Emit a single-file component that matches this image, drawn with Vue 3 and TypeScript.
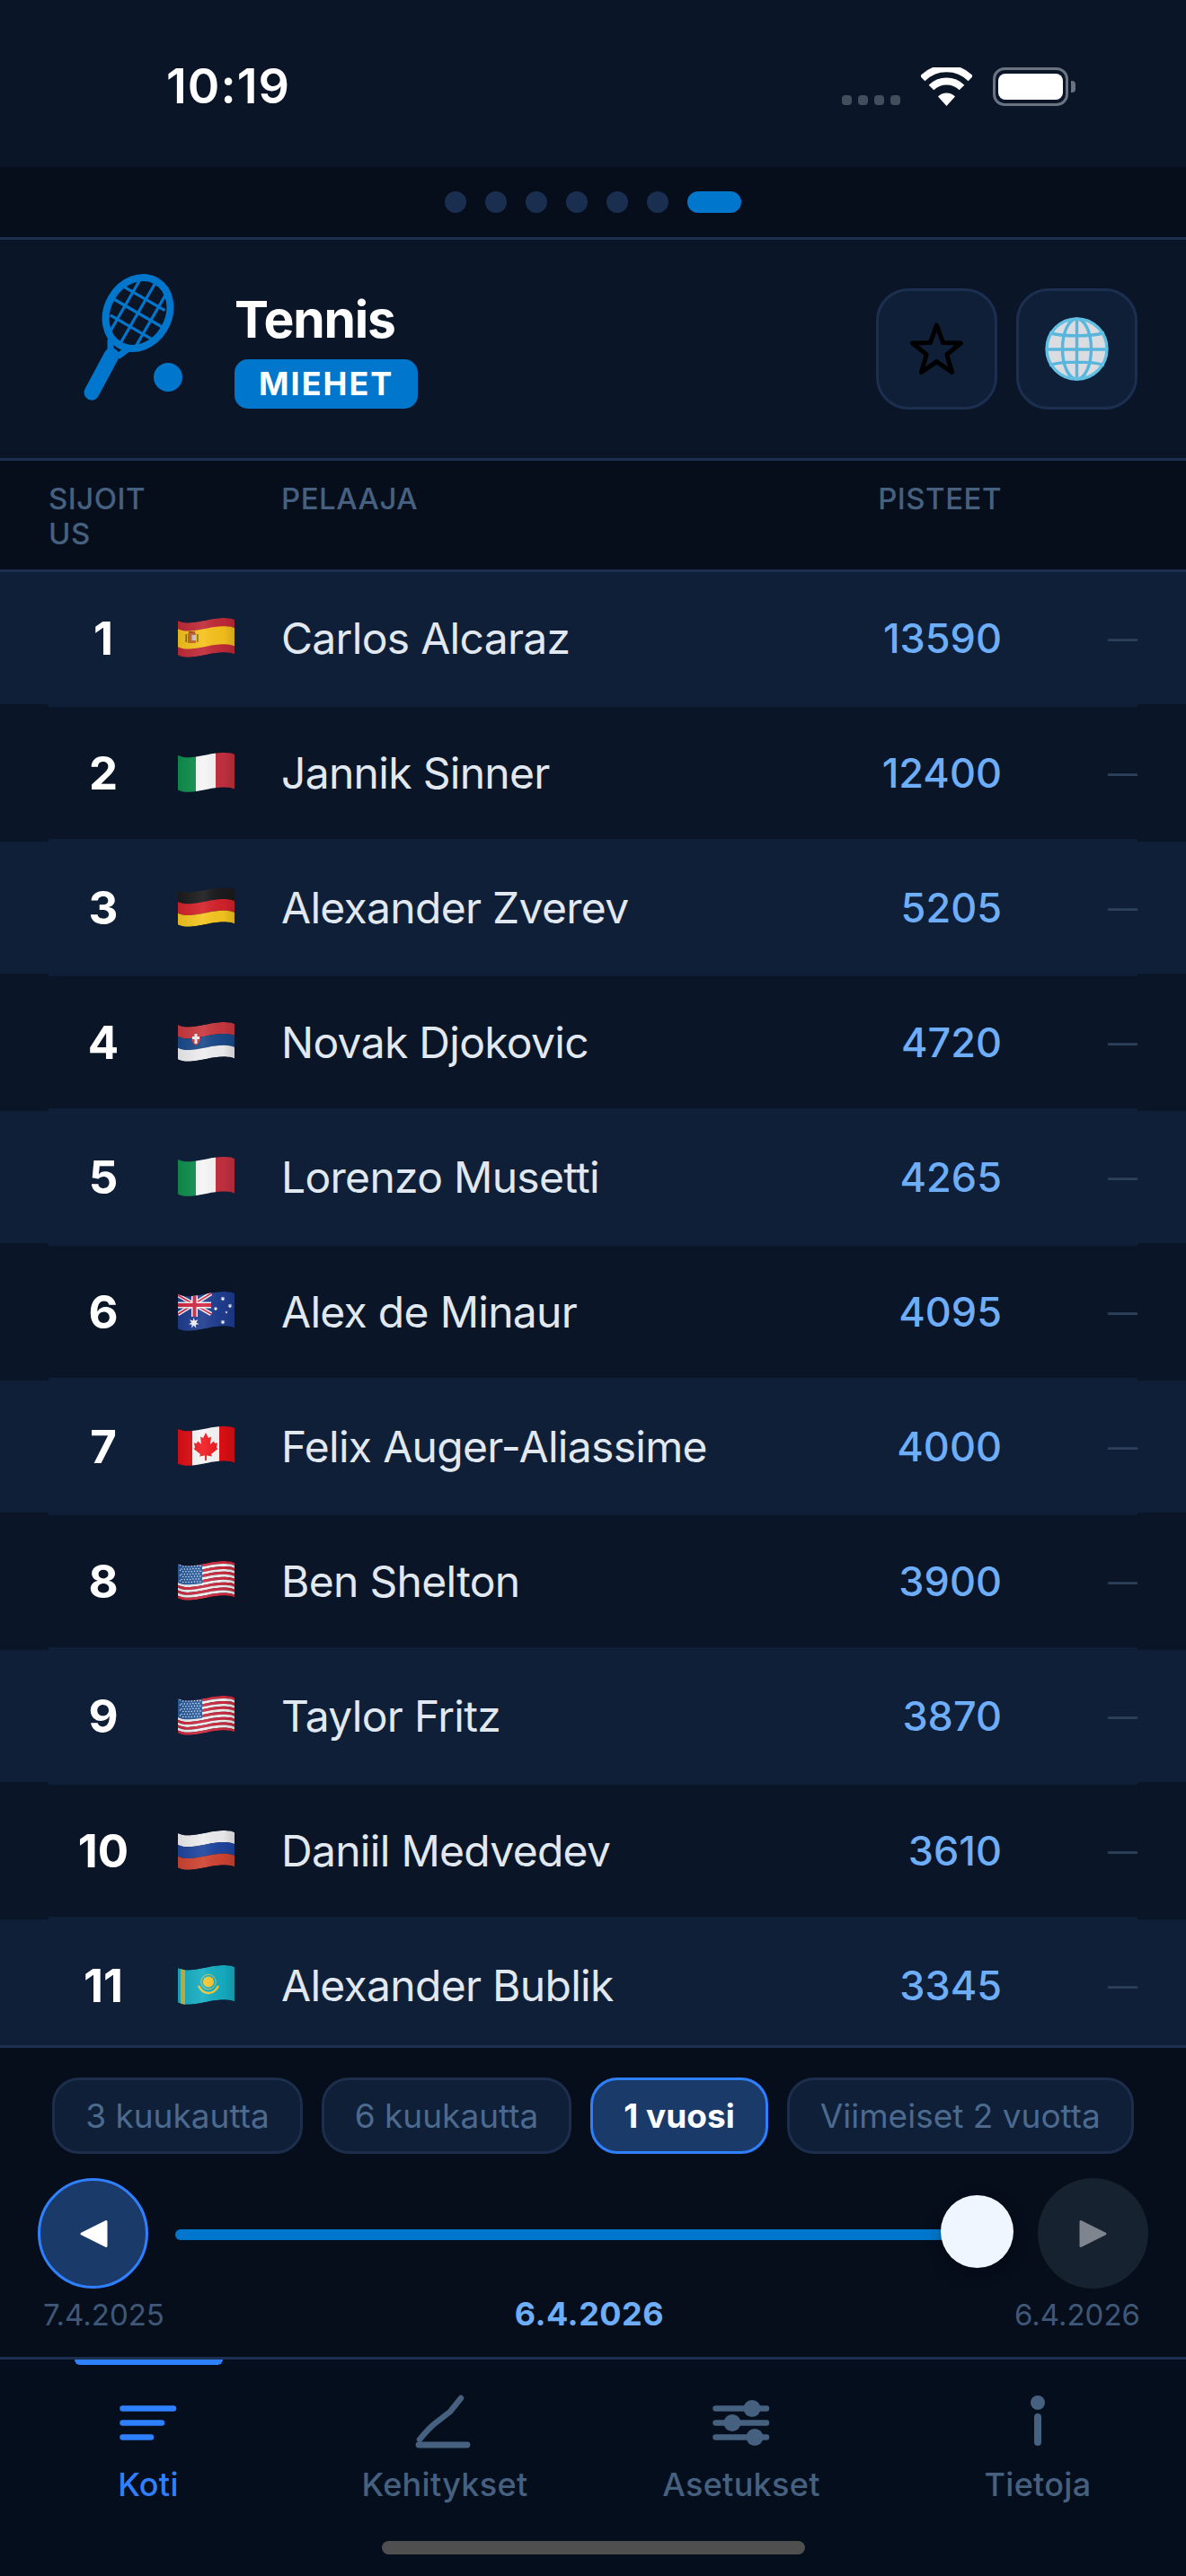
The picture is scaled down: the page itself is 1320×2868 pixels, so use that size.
<script setup lang="ts">
interface Shape {
  d: string;
  fill?: string;
  stroke?: string;
  sw?: number;
}

const H = 38.5;

function band(t0: number, t1: number, fill: string): Shape {
  const a = t0 * H;
  const b = t1 * H;
  return {
    fill,
    d:
      `M0 ${a + 3}C5 ${a + 5.5} 10 ${a + 5.5} 16 ${a + 5}C28 ${a + 4} 38 ${a} 50 ${a}C55 ${a} 60 ${a + 0.5} 63 ${a + 2}` +
      `L63 ${b + 2}C60 ${b + 0.5} 55 ${b} 50 ${b}C38 ${b} 28 ${b + 4} 16 ${b + 5}C10 ${b + 5.5} 5 ${b + 5.5} 0 ${b + 3}Z`,
  };
}

const col = (x0: number, x1: number, fill: string): Shape => ({ fill, d: `M${x0} 0H${x1}V46H${x0}Z` });

const dot = (x: number, y: number, r: number) => `M${x - r} ${y}a${r} ${r} 0 1 0 ${2 * r} 0a${r} ${r} 0 1 0 ${-2 * r} 0Z`;

function star(x: number, y: number, r: number, n = 7): string {
  let d = '';
  for (let i = 0; i < n * 2; i++) {
    const rad = i % 2 ? r * 0.45 : r;
    const ang = (Math.PI * i) / n - Math.PI / 2;
    d += `${i ? 'L' : 'M'}${(x + rad * Math.cos(ang)).toFixed(2)} ${(y + rad * Math.sin(ang)).toFixed(2)}`;
  }
  return d + 'Z';
}

function usStars(): string {
  let d = '';
  for (let r = 0; r < 7; r++) {
    for (let c = 0; c < 8; c++) {
      const x = 2.5 + c * 3.2 + (r % 2 ? 1.6 : 0);
      if (x > 26) continue;
      const wob = x < 16 ? 5 : 4.5;
      d += dot(x, wob + 1 + r * 2.9 - (x < 4 ? 1.5 : 0), 0.75);
    }
  }
  return d;
}

function usStripes(): Shape[] {
  const out: Shape[] = [];
  for (let i = 0; i < 13; i++) out.push(band(i / 13, (i + 1) / 13, i % 2 ? '#f0f0f2' : '#cf2a3e'));
  return out;
}

const FLAGS: Record<string, Shape[]> = {
  es: [
    band(0, 1, '#c02a38'),
    band(0.24, 0.76, '#f5c21c'),
    { d: 'M11 17h9v11h-9z', fill: '#c2662c' },
    { d: 'M15.5 19h4.5v6h-4.5z', fill: '#c9c2c8' },
    { d: 'M12 15h7v2h-7z', fill: '#a8501f' },
    { d: 'M8.5 18h1.4v9H8.5zM21.2 18h1.4v9h-1.4z', fill: '#6a5a32' },
  ],
  it: [col(0, 20, '#0f8f4e'), col(20, 42, '#f5f5f6'), col(42, 63, '#c4303f')],
  de: [band(0, 0.34, '#1b1b1e'), band(0.34, 0.67, '#d4232b'), band(0.67, 1, '#f5c51f')],
  rs: [
    band(0, 0.34, '#c8383f'),
    band(0.34, 0.67, '#1a4a8a'),
    band(0.67, 1, '#eeeef0'),
    { d: 'M15 11h10v6c0 5-3 8-5 9-2-1-5-4-5-9z', fill: '#c8383f' },
    { d: 'M18.5 13h3v11h-3zM16 16h8v3h-8z', fill: '#eee' },
  ],
  au: [
    band(0, 1, '#1f3d8f'),
    { d: 'M0 4L37 25M0 25L37 2', stroke: '#f2f2f4', sw: 4.5 },
    { d: 'M0 4L37 25M0 25L37 2', stroke: '#d32a45', sw: 1.6 },
    { d: 'M18.5 0V28M0 15H37', stroke: '#f2f2f4', sw: 7 },
    { d: 'M18.5 0V28M0 15H37', stroke: '#d32a45', sw: 4 },
    { d: star(17.7, 35, 6) + star(50, 8, 2.8) + star(58, 16, 2.8) + star(42, 19, 2.5) + star(54, 23, 1.7, 5) + star(50, 34, 2.8), fill: '#f4f4f6' },
  ],
  ca: [
    col(0, 16, '#dd0f14'),
    col(16, 46, '#f5f5f5'),
    col(46, 63, '#dd0f14'),
    {
      d: 'M31 7L34 13L37 11.5L36 20L40 16.5L41 19L44 18.5L43 24L44.5 25L37 31L38 33.5L32 32.5V38H30V32.5L24 33.5L25 31L17.5 25L19 24L18 18.5L21 19L22 16.5L26 20L25 11.5L28 13Z',
      fill: '#ef1c22',
    },
  ],
  us: [
    ...usStripes(),
    { d: 'M0 3C5 5.5 10 5.5 16 5L27 4.2V25L16 26C10 26.5 5 26.5 0 24Z', fill: '#2a5d9e' },
    { d: usStars(), fill: '#e9eef6' },
  ],
  ru: [band(0, 0.34, '#ededf0'), band(0.34, 0.67, '#1f459f'), band(0.67, 1, '#cf4432')],
  kz: [
    band(0, 1, '#16adc2'),
    { d: 'M3 2h5v42H3z', fill: '#c5b33e' },
    { d: dot(34, 18.5, 6), fill: '#f7c72f' },
    { d: dot(34, 18.5, 8.2), fill: 'none', stroke: '#e9c94a', sw: 0.8 },
    { d: 'M23 23C26 29 30 31 34 31C38 31 42 29 45 23', fill: 'none', stroke: '#f7c72f', sw: 2.4 },
  ],
};

const players = [
  { name: 'Carlos Alcaraz', points: 13590, flag: 'es' },
  { name: 'Jannik Sinner', points: 12400, flag: 'it' },
  { name: 'Alexander Zverev', points: 5205, flag: 'de' },
  { name: 'Novak Djokovic', points: 4720, flag: 'rs' },
  { name: 'Lorenzo Musetti', points: 4265, flag: 'it' },
  { name: 'Alex de Minaur', points: 4095, flag: 'au' },
  { name: 'Felix Auger-Aliassime', points: 4000, flag: 'ca' },
  { name: 'Ben Shelton', points: 3900, flag: 'us' },
  { name: 'Taylor Fritz', points: 3870, flag: 'us' },
  { name: 'Daniil Medvedev', points: 3610, flag: 'ru' },
  { name: 'Alexander Bublik', points: 3345, flag: 'kz' },
];

const WAVE = band(0, 1, '#000').d;

const ranges = [
  { label: '3 kuukautta', active: false },
  { label: '6 kuukautta', active: false },
  { label: '1 vuosi', active: true },
  { label: 'Viimeiset 2 vuotta', active: false },
];

const tabs = ['Koti', 'Kehitykset', 'Asetukset', 'Tietoja'];
</script>

<template>
  <div class="app">
    <div class="status">
      <span class="time">10:19</span>
      <div class="status-right">
        <div class="signal"><i></i><i></i><i></i><i></i></div>
        <svg class="wifi" width="57" height="43" viewBox="0 0 57 43">
          <g fill="none" stroke="#fff" stroke-width="8">
            <path d="M1.6 12.4A38 38 0 0 1 55.4 12.4" />
            <path d="M11.5 22.5A24 24 0 0 1 45.5 22.5" />
          </g>
          <path d="M28.5 43L19 32.5A13.5 13.5 0 0 1 38 32.5Z" fill="#fff" />
        </svg>
        <div class="battery"><div class="battery-fill"></div></div>
        <div class="battery-nub"></div>
      </div>
    </div>

    <div class="pager">
      <i v-for="n in 6" :key="n" class="pager-dot"></i>
      <i class="pager-dot on"></i>
    </div>

    <header class="head">
      <svg class="racket" width="116" height="148" viewBox="0 0 116 148">
        <g fill="none" stroke="#0077cc" stroke-linecap="round">
          <g transform="rotate(30 63.5 46.5)">
            <ellipse cx="63.5" cy="46.5" rx="34" ry="41" stroke-width="8" />
            <path
              d="M47 11V82M63.5 6V87M80 11V82M34 29H88M32 46.5H95M38 64H92"
              stroke-width="3.2"
              stroke-linecap="butt"
            />
          </g>
          <path d="M33 76V94M53 86L41 95" stroke-width="7" stroke-linecap="butt" />
          <path d="M34 94L12 135" stroke-width="17" />
        </g>
        <circle cx="97" cy="118" r="16" fill="#0077cc" />
      </svg>
      <div class="head-text">
        <div class="title">Tennis</div>
        <div class="badge">MIEHET</div>
      </div>
      <div class="head-btns">
        <button class="sq-btn">
          <svg width="63" height="61" viewBox="0 0 63 61">
            <path
              d="M31.5 4L38.6 23.6L58.5 24L42.8 36.6L48.6 56.5L31.5 44.6L14.4 56.5L20.2 36.6L4.5 24L24.4 23.6Z"
              fill="none"
              stroke="#000"
              stroke-width="5"
              stroke-linejoin="round"
            />
          </svg>
        </button>
        <button class="sq-btn">
          <svg width="71" height="71" viewBox="0 0 71 71">
            <circle cx="35.5" cy="35.5" r="34" fill="#dadce1" />
            <g fill="none" stroke="#58b6dc" stroke-width="3.4">
              <ellipse cx="35.5" cy="35.5" rx="16" ry="33.5" />
              <path d="M35.5 2V69M5 17.5C20 22 51 22 66 17.5M2 36H69M5 53.5C20 49 51 49 66 53.5" />
              <circle cx="35.5" cy="35.5" r="33.5" stroke="#62bfe2" />
            </g>
          </svg>
        </button>
      </div>
    </header>

    <div class="thead">
      <span class="th th-rank">SIJOITUS</span>
      <span class="th th-name">PELAAJA</span>
      <span class="th th-points">PISTEET</span>
    </div>

    <div class="list">
      <template v-for="(p, i) in players" :key="p.name">
        <div class="row" :class="{ odd: i % 2 === 0 }">
          <span class="rank">{{ i + 1 }}</span>
          <span class="flag-cell">
            <svg class="flag" width="63" height="46" viewBox="0 0 63 46">
              <defs>
                <clipPath :id="`wave${i}`"><path :d="WAVE" /></clipPath>
                <linearGradient :id="`sheen${i}`" x1="0" x2="1" y1="0" y2="0">
                  <stop offset="0" stop-color="#000" stop-opacity="0.08" />
                  <stop offset="0.45" stop-color="#fff" stop-opacity="0.08" />
                  <stop offset="0.8" stop-color="#000" stop-opacity="0.03" />
                  <stop offset="1" stop-color="#000" stop-opacity="0.14" />
                </linearGradient>
              </defs>
              <g :clip-path="`url(#wave${i})`">
                <path
                  v-for="(s, k) in FLAGS[p.flag]"
                  :key="k"
                  :d="s.d"
                  :fill="s.fill ?? 'none'"
                  :stroke="s.stroke"
                  :stroke-width="s.sw"
                />
                <path :d="WAVE" :fill="`url(#sheen${i})`" />
              </g>
            </svg>
          </span>
          <span class="name">{{ p.name }}</span>
          <span class="points">{{ p.points }}</span>
          <span class="trend">—</span>
        </div>
        <div class="sep"></div>
      </template>
    </div>

    <section class="controls">
      <div class="chips">
        <button v-for="r in ranges" :key="r.label" class="chip" :class="{ active: r.active }">{{ r.label }}</button>
      </div>
      <div class="slider">
        <button class="round prev">
          <svg width="34" height="34" viewBox="0 0 34 34">
            <path d="M31 3.5V30.5L4 17Z" fill="#fff" stroke="#fff" stroke-width="3" stroke-linejoin="round" />
          </svg>
        </button>
        <div class="track"><div class="thumb"></div></div>
        <button class="round next">
          <svg width="34" height="34" viewBox="0 0 34 34">
            <path d="M3 3.5V30.5L30 17Z" fill="#7f858f" stroke="#7f858f" stroke-width="3" stroke-linejoin="round" />
          </svg>
        </button>
      </div>
      <div class="dates">
        <span class="date">7.4.2025</span>
        <span class="date-now">6.4.2026</span>
        <span class="date">6.4.2026</span>
      </div>
    </section>

    <nav class="tabs">
      <div v-for="(t, i) in tabs" :key="t" class="tab" :class="{ on: i === 0 }">
        <i v-if="i === 0" class="tab-mark"></i>
        <svg class="tab-icon" width="72" height="66" viewBox="0 0 72 66">
          <g v-if="i === 0" fill="none" stroke="currentColor" stroke-width="6.5" stroke-linecap="round">
            <path d="M7.5 16.5H64M7.5 32.5H51M7.5 48.5H39" />
          </g>
          <g v-else-if="i === 1" fill="none" stroke="currentColor" stroke-width="6.5" stroke-linecap="round" stroke-linejoin="round">
            <path d="M8 51C13 45 18 39 24 34L42 20C46 15 50 10 54 5" />
            <path d="M7 57H61" stroke-width="6.8" />
          </g>
          <g v-else-if="i === 2" fill="currentColor">
            <path d="M7.5 16.5H64M7.5 32.5H64M7.5 48.5H64" stroke="currentColor" stroke-width="6.5" stroke-linecap="round" />
            <circle cx="48" cy="16.5" r="9.5" />
            <circle cx="26" cy="32.5" r="9.5" />
            <circle cx="51" cy="48.5" r="9.5" />
          </g>
          <g v-else fill="currentColor">
            <circle cx="36" cy="10" r="8" />
            <rect x="32" y="22" width="8" height="36" rx="4" />
          </g>
        </svg>
        <span class="tab-label">{{ t }}</span>
      </div>
      <i class="home-bar"></i>
    </nav>
  </div>
</template>

<style scoped>
.app {
  width: 1320px;
  height: 2868px;
  display: flex;
  flex-direction: column;
  overflow: hidden;
  background: #0a1628;
  font-family: Inter, 'Noto Sans', sans-serif;
}

.status {
  height: 186px;
  flex: none;
  position: relative;
  display: flex;
  justify-content: space-between;
  padding: 66px 123px 0 185px;
  box-sizing: border-box;
}
.time {
  color: #fff;
  font-size: 54px;
  line-height: 60px;
  font-weight: 600;
  letter-spacing: 1px;
}
.status-right {
  display: flex;
  align-items: flex-end;
  height: 43px;
  margin-top: 9px;
}
.signal {
  display: flex;
  gap: 7px;
  margin-right: 23px;
  margin-bottom: 1px;
}
.signal i {
  width: 11px;
  height: 11px;
  border-radius: 4px;
  background: #434e5c;
}
.wifi {
  display: block;
  margin-right: 23px;
}
.battery {
  width: 84px;
  height: 43px;
  box-sizing: border-box;
  border: 3px solid #6b7280;
  border-radius: 13px;
  padding: 4px 3px;
}
.battery-fill {
  width: 100%;
  height: 100%;
  background: #fff;
  border-radius: 8px;
}
.battery-nub {
  width: 5px;
  height: 13px;
  background: #6b7280;
  border-radius: 0 4px 4px 0;
  margin: 0 0 15px 3px;
}

.pager {
  height: 81px;
  flex: none;
  box-sizing: border-box;
  background: #060e1c;
  border-bottom: 3px solid #1c2f50;
  display: flex;
  justify-content: center;
  align-items: center;
  gap: 21px;
}
.pager-dot {
  width: 24px;
  height: 24px;
  border-radius: 12px;
  background: #1a2f50;
}
.pager-dot.on {
  width: 60px;
  background: #0077cc;
}

.head {
  height: 246px;
  flex: none;
  box-sizing: border-box;
  border-bottom: 3px solid #1c2f50;
  display: flex;
  align-items: flex-start;
  padding: 35px 54px 0 90px;
}
.racket {
  display: block;
  margin-right: 55px;
}
.head-text {
  flex: 1;
  margin-top: 19px;
}
.title {
  color: #fff;
  font-size: 57px;
  line-height: 69px;
  font-weight: 700;
  letter-spacing: -1.2px;
}
.badge {
  display: inline-block;
  margin-top: 10px;
  padding: 0 27px;
  height: 55px;
  line-height: 55px;
  background: #0077cc;
  color: #fff;
  border-radius: 15px;
  font-size: 36px;
  font-weight: 700;
  letter-spacing: 2px;
}
.head-btns {
  display: flex;
  gap: 21px;
  margin-top: 19px;
}
.sq-btn {
  width: 135px;
  height: 135px;
  box-sizing: border-box;
  background: #0f1f38;
  border: 3px solid #1c2f50;
  border-radius: 36px;
  padding: 0;
  display: flex;
  align-items: center;
  justify-content: center;
}

.thead {
  height: 124px;
  flex: none;
  box-sizing: border-box;
  background: #060e1c;
  border-bottom: 3px solid #1c2f50;
  display: grid;
  grid-template-columns: 122px 137px 1fr 190px 151px;
  padding: 23px 54px 0;
  align-items: start;
}
.th {
  color: #46607f;
  font-size: 33px;
  line-height: 39px;
  font-weight: 500;
  letter-spacing: 0.5px;
}
.th-rank {
  grid-column: 1;
  word-break: break-all;
  width: 112px;
}
.th-name {
  grid-column: 3;
}
.th-points {
  grid-column: 4;
  text-align: right;
}

.list {
  flex: 1;
  min-height: 0;
  overflow: hidden;
  background: #0a1628;
}
.row {
  height: 147px;
  box-sizing: border-box;
  display: grid;
  grid-template-columns: 122px 137px 1fr 190px 151px;
  align-items: center;
  padding: 0 54px;
}
.row.odd {
  background: #0f1f38;
}
.sep {
  height: 3px;
  margin: 0 54px;
  background: #0f1f38;
}
.rank {
  color: #fff;
  font-size: 51px;
  font-weight: 700;
  text-align: center;
}
.flag-cell {
  padding-left: 22px;
  display: flex;
}
.flag {
  display: block;
  filter: blur(0.45px);
}
.name {
  color: #e2e8f0;
  font-size: 48px;
  font-weight: 400;
  letter-spacing: -0.7px;
  white-space: nowrap;
}
.points {
  color: #6eaef8;
  font-size: 45px;
  font-weight: 500;
  text-align: right;
}
.trend {
  color: #2c4059;
  font-size: 33px;
  text-align: right;
}

.controls {
  flex: none;
  height: 347px;
  box-sizing: border-box;
  background: #060e1c;
  border-top: 3px solid #1c2f50;
  padding-top: 33px;
}
.chips {
  display: flex;
  justify-content: center;
  gap: 21px;
}
.chip {
  height: 85px;
  box-sizing: border-box;
  padding: 0 34px;
  background: #0f1f38;
  border: 3px solid #1c2e4c;
  border-radius: 30px;
  color: #4c6a8e;
  font-family: inherit;
  font-size: 37px;
  font-weight: 400;
  white-space: nowrap;
}
.chip.active {
  background: #1a3a6a;
  border-color: #2f80ff;
  color: #fff;
  font-weight: 700;
}
.slider {
  display: flex;
  align-items: center;
  padding: 0 42px;
  margin-top: 27px;
}
.round {
  width: 123px;
  height: 123px;
  flex: none;
  box-sizing: border-box;
  border-radius: 50%;
  border: 3px solid transparent;
  padding: 0;
  display: flex;
  align-items: center;
  justify-content: center;
}
.prev {
  background: #1a3a6a;
  border-color: #2f80ff;
}
.next {
  background: #172231;
}
.track {
  flex: 1;
  height: 12px;
  margin: 2px 30px 0;
  background: #0077cc;
  border-radius: 6px;
  position: relative;
}
.thumb {
  position: absolute;
  right: -3px;
  top: -38px;
  width: 81px;
  height: 81px;
  border-radius: 50%;
  background: #eff6ff;
  box-shadow: 0 6px 18px rgba(0, 0, 0, 0.3);
}
.dates {
  display: flex;
  justify-content: space-between;
  align-items: baseline;
  padding: 0 51px 0 48px;
  margin-top: 7px;
}
.date {
  color: #3f5878;
  font-size: 33px;
  line-height: 42px;
}
.date-now {
  color: #6eaef8;
  font-size: 36px;
  font-weight: 700;
  letter-spacing: 0.5px;
  line-height: 42px;
}

.tabs {
  flex: none;
  height: 244px;
  box-sizing: border-box;
  background: #050e1c;
  border-top: 3px solid #1c2f50;
  display: grid;
  grid-template-columns: repeat(4, 330px);
  position: relative;
}
.tab {
  position: relative;
  display: flex;
  flex-direction: column;
  align-items: center;
  padding-top: 38px;
  color: #46607f;
}
.tab.on {
  color: #2f80ff;
}
.tab-mark {
  position: absolute;
  top: 0;
  left: 83px;
  width: 165px;
  height: 6px;
  background: #2f80ff;
  border-radius: 0 0 6px 6px;
}
.tab-icon {
  display: block;
}
.tab-label {
  font-size: 36px;
  line-height: 44px;
  font-weight: 500;
  letter-spacing: 0.3px;
  margin-top: 13px;
}
.home-bar {
  position: absolute;
  left: 425px;
  top: 202px;
  width: 471px;
  height: 15px;
  border-radius: 8px;
  background: #4f4f4f;
}
</style>

<style>
html,
body {
  margin: 0;
  background: #060e1c;
}
button {
  outline: none;
}
</style>
